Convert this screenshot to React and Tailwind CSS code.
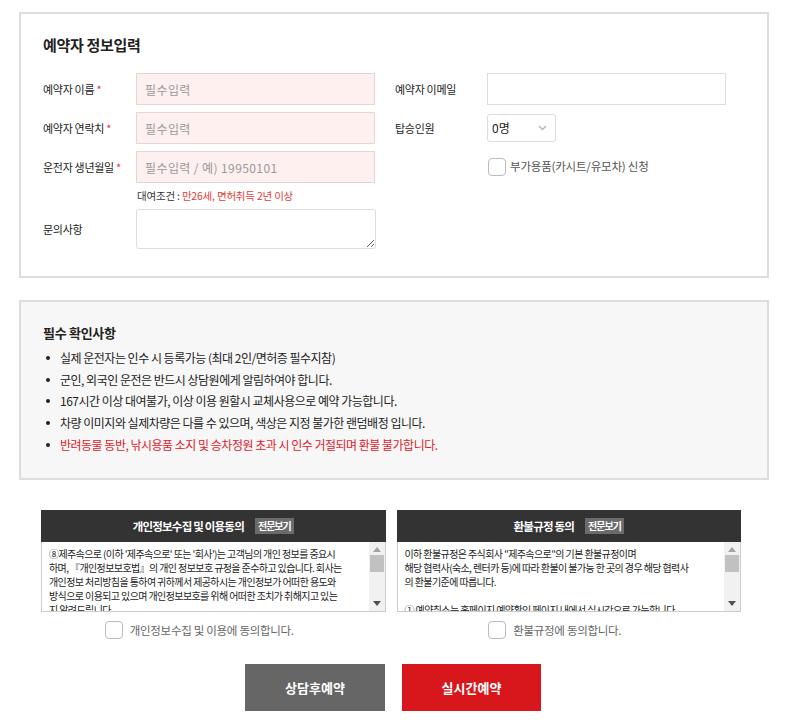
import React from 'react';

const notices = [
  { text: '실제 운전자는 인수 시 등록가능 (최대 2인/면허증 필수지참)' },
  { text: '군인, 외국인 운전은 반드시 상담원에게 알림하여야 합니다.' },
  { text: '167시간 이상 대여불가, 이상 이용 원할시 교체사용으로 예약 가능합니다.' },
  { text: '차량 이미지와 실제차량은 다를 수 있으며, 색상은 지정 불가한 랜덤배정 입니다.' },
  { text: '반려동물 동반, 낚시용품 소지 및 승차정원 초과 시 인수 거절되며 환불 불가합니다.', red: true },
];

const privacyLines = [
  "⑧제주속으로 (이하 '제주속으로' 또는 '회사')는 고객님의 개인 정보를 중요시",
  '하며, 『개인정보보호법』의 개인 정보보호 규정을 준수하고 있습니다. 회사는',
  '개인정보 처리방침을 통하여 귀하께서 제공하시는 개인정보가 어떠한 용도와',
  '방식으로 이용되고 있으며 개인정보보호를 위해 어떠한 조치가 취해지고 있는',
  '지 알려드립니다.',
];

const refundLines = [
  '이하 환불규정은 주식회사 "제주속으로"의 기본 환불규정이며',
  '해당 협력사(숙소, 렌터카 등)에 따라 환불이 불가능 한 곳의 경우 해당 협력사',
  '의 환불기준에 따릅니다.',
  '',
  '① 예약취소는 홈페이지 예약확인 페이지 내에서 실시간으로 가능합니다',
];

const Label = ({ children, required, width = 'w-[93px]' }) => (
  <div className={`${width} shrink-0 text-[11px] tracking-[-0.3px] text-[#222]`}>
    {children}
    {required && <span className="text-[#e8334a]"> *</span>}
  </div>
);

const PinkInput = ({ placeholder }) => (
  <input
    placeholder={placeholder}
    className="w-[239px] h-[32px] border border-[#e2d6d6] bg-[#fff0f0] px-[8px] text-[12px] tracking-[0.4px] outline-none placeholder:text-[#999]"
  />
);

const Checkbox = () => (
  <div className="w-[18px] h-[18px] shrink-0 rounded-[4px] border border-[#bbb] bg-white" />
);

const ScrollBar = () => (
  <div className="w-[16px] shrink-0 flex flex-col items-center bg-[#f1f1f1] py-[5px]">
    <svg width="8" height="5" viewBox="0 0 8 5"><path d="M0 5 L4 0 L8 5 Z" fill="#a3a3a3" /></svg>
    <div className="w-[14px] h-[17px] bg-[#c1c1c1] mt-[3px]" />
    <div className="flex-1" />
    <svg width="8" height="5" viewBox="0 0 8 5"><path d="M0 0 L4 5 L8 0 Z" fill="#505050" /></svg>
  </div>
);

const AgreePanel = ({ title, lines, agree }) => (
  <div className="flex-1 flex flex-col">
    <div className="h-[32px] bg-[#333] flex items-center justify-center">
      <span className="text-white font-bold text-[11.5px] tracking-[-0.8px]">{title}</span>
      <span className="ml-[11px] bg-[#6b6b6b] text-white font-bold text-[10px] tracking-[-1px] px-[3px] leading-[16px]">전문보기</span>
    </div>
    <div className="h-[70px] border border-t-0 border-[#ccc] flex overflow-hidden">
      <div className="flex-1 pl-[7px] pt-[5px] overflow-hidden">
        {lines.map((l, i) => (
          <div key={i} className="whitespace-nowrap text-[10px] tracking-[-0.6px] leading-[14px] text-[#222] h-[14px]">{l}</div>
        ))}
      </div>
      <ScrollBar />
    </div>
    <div className="flex items-center justify-center pr-[28px] mt-[9px]">
      <Checkbox />
      <span className="ml-[7px] text-[11.5px] tracking-[-0.3px] text-[#666]">{agree}</span>
    </div>
  </div>
);

export default function App() {
  return (
    <div className="min-h-[722px] bg-white pt-[12px] font-['Noto_Sans_CJK_KR',sans-serif]">
      <section className="ml-[19px] w-[750px] border-2 border-[#ddd] pt-[20px] pl-[22px] pb-[27px]">
        <h2 className="text-[15px] leading-[22px] font-bold tracking-[-0.3px] text-[#222]">예약자 정보입력</h2>
        <div className="mt-[17px] flex items-center">
          <Label required>예약자 이름</Label>
          <PinkInput placeholder="필수입력" />
          <div className="w-[20px]" />
          <Label width="w-[92px]">예약자 이메일</Label>
          <input className="w-[239px] h-[32px] border border-[#ddd] bg-white outline-none" />
        </div>
        <div className="mt-[7px] flex items-center">
          <Label required>예약자 연락치</Label>
          <PinkInput placeholder="필수입력" />
          <div className="w-[20px]" />
          <Label width="w-[92px]">탑승인원</Label>
          <div className="w-[69px] h-[28px] border border-[#ddd] rounded-[3px] flex items-center justify-between pl-[4px] pr-[8px]">
            <span className="text-[12px] text-[#222]">0명</span>
            <svg width="9" height="6" viewBox="0 0 9 6"><path d="M1 1 L4.5 4.5 L8 1" stroke="#b5b5b5" strokeWidth="1.4" fill="none" /></svg>
          </div>
        </div>
        <div className="mt-[7px] flex items-center">
          <Label required>운전자 생년월일</Label>
          <PinkInput placeholder="필수입력 / 예) 19950101" />
          <div className="w-[20px]" />
          <div className="w-[92px] shrink-0" />
          <div className="flex items-center">
            <div className="ml-[1px]"><Checkbox /></div>
            <span className="ml-[4px] text-[11.5px] tracking-[-0.2px] text-[#555]">부가용품(카시트/유모차) 신청</span>
          </div>
        </div>
        <div className="mt-[5px] ml-[94px] text-[10.5px] leading-[16px] tracking-[-0.2px] text-[#333]">
          대여조건 : <span className="text-[#e0403a]">만26세, 면허취득 2년 이상</span>
        </div>
        <div className="mt-[5px] flex items-center">
          <Label>문의사항</Label>
          <textarea className="w-[240px] h-[40px] border border-[#ddd] rounded-[3px] outline-none" />
        </div>
      </section>

      <section className="ml-[19px] mt-[22px] w-[750px] border-2 border-[#ddd] bg-[#f7f7f7] pt-[22px] pl-[22px] pb-[23px]">
        <h3 className="text-[13px] leading-[18px] font-bold tracking-[-0.3px] text-[#222]">필수 확인사항</h3>
        <ul className="mt-[5px]">
          {notices.map((n, i) => (
            <li key={i} className="flex items-center h-[21.7px]">
              <span className="w-[4px] h-[4px] rounded-full bg-[#222] ml-[3px] mr-[10px]" />
              <span className={`text-[12px] tracking-[-0.5px] ${n.red ? 'text-[#e0202a]' : 'text-[#222]'}`}>{n.text}</span>
            </li>
          ))}
        </ul>
      </section>

      <div className="ml-[41px] mt-[30px] w-[700px] flex gap-[11px]">
        <AgreePanel title="개인정보수집 및 이용동의" lines={privacyLines} agree="개인정보수집 및 이용에 동의합니다." />
        <AgreePanel title="환불규정 동의" lines={refundLines} agree="환불규정에 동의합니다." />
      </div>

      <div className="mt-[25px] ml-[245px] flex gap-[17px]">
        <button className="w-[140px] h-[47px] bg-[#666] text-white font-bold text-[13px]">상담후예약</button>
        <button className="w-[139px] h-[47px] bg-[#d7171b] text-white font-bold text-[13px]">실시간예약</button>
      </div>
    </div>
  );
}
